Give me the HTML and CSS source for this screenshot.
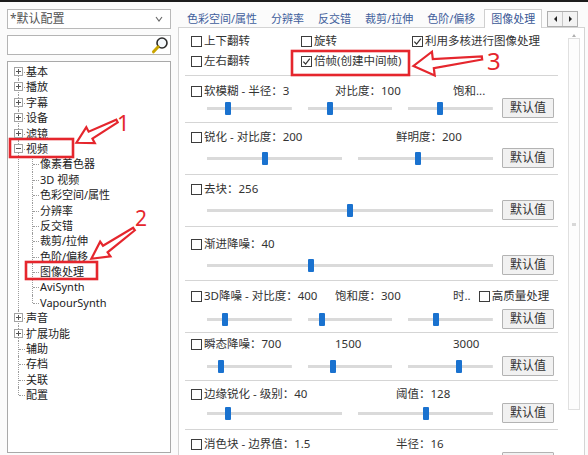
FILE: index.html
```html
<!DOCTYPE html>
<html lang="zh-CN">
<head>
<meta charset="utf-8">
<title>图像处理</title>
<link rel="stylesheet" href="styles.css">
</head>
<body>
<div class="topbar"></div>
<div class="dialog">
  <aside class="side">
    <div class="combo"><span>*默认配置</span>
      <svg class="chev" width="8" height="6" viewBox="0 0 8 6"><polyline points="1,1 4,5 7,1" fill="none" stroke="#666" stroke-width="1.1"/></svg>
    </div>
    <div class="search">
      <svg width="18" height="18" viewBox="0 0 18 18"><circle cx="11" cy="7" r="5" fill="#f4f8fb" stroke="#2a2a2a" stroke-width="1.6"/><line x1="7.2" y1="10.8" x2="2.5" y2="15.8" stroke="#c9a400" stroke-width="3" stroke-linecap="round"/></svg>
    </div>
    <div class="treebox">
      <ul class="tree root">
        <li><span class="row"><span class="exp"></span>基本</span></li>
        <li><span class="row"><span class="exp"></span>播放</span></li>
        <li><span class="row"><span class="exp"></span>字幕</span></li>
        <li><span class="row"><span class="exp"></span>设备</span></li>
        <li><span class="row"><span class="exp"></span>滤镜</span></li>
        <li><span class="row"><span class="exp minus"></span>视频</span>
          <ul class="tree sub">
            <li><span class="row">像素着色器</span></li>
            <li><span class="row">3D 视频</span></li>
            <li><span class="row">色彩空间/属性</span></li>
            <li><span class="row">分辨率</span></li>
            <li><span class="row">反交错</span></li>
            <li><span class="row">裁剪/拉伸</span></li>
            <li><span class="row">色阶/偏移</span></li>
            <li><span class="row">图像处理</span></li>
            <li><span class="row">AviSynth</span></li>
            <li><span class="row">VapourSynth</span></li>
          </ul>
        </li>
        <li><span class="row"><span class="exp"></span>声音</span></li>
        <li><span class="row"><span class="exp"></span>扩展功能</span></li>
        <li><span class="row">辅助</span></li>
        <li><span class="row">存档</span></li>
        <li><span class="row">关联</span></li>
        <li><span class="row">配置</span></li>
      </ul>
    </div>
  </aside>

  <main class="main">
    <div class="tabs">
      <span class="tab">色彩空间/属性</span>
      <span class="tab">分辨率</span>
      <span class="tab">反交错</span>
      <span class="tab">裁剪/拉伸</span>
      <span class="tab">色阶/偏移</span>
      <span class="tab sel">图像处理</span>
      <span class="tabnav"><span class="nb"><i class="tl"></i></span><span class="nb"><i class="tr"></i></span></span>
    </div>
    <div class="panel">
      <div class="content">
        <div class="opts">
          <label class="chk"><span class="cb"></span>上下翻转</label>
          <label class="chk"><span class="cb"></span>旋转</label>
          <label class="chk"><span class="cb on"><svg width="9" height="9" viewBox="0 0 9 9"><polyline points="1.3,4.6 3.6,7 7.8,1.6" fill="none" stroke="#333" stroke-width="1.2"/></svg></span>利用多核进行图像处理</label>
          <label class="chk"><span class="cb"></span>左右翻转</label>
          <label class="chk"><span class="cb on"><svg width="9" height="9" viewBox="0 0 9 9"><polyline points="1.3,4.6 3.6,7 7.8,1.6" fill="none" stroke="#333" stroke-width="1.2"/></svg></span>倍帧(创建中间帧)</label>
        </div>

        <div class="sec s1">
          <div class="hdr"><label class="chk"><span class="cb"></span>软模糊 - 半径：3</label><span>对比度：100</span><span>饱和...</span></div>
          <div class="srow"><div class="sls"><div class="sl"><i class="th" style="--p:.23"></i></div><div class="sl"><i class="th" style="--p:.24"></i></div><div class="sl"><i class="th" style="--p:.37"></i></div></div><span class="btn">默认值</span></div>
        </div>

        <div class="sec">
          <div class="hdr two"><label class="chk"><span class="cb"></span>锐化 - 对比度：200</label><span>鲜明度：200</span></div>
          <div class="srow"><div class="sls"><div class="sl"><i class="th" style="--p:.43"></i></div><div class="sl"><i class="th" style="--p:.44"></i></div></div><span class="btn">默认值</span></div>
        </div>

        <div class="sec">
          <div class="hdr"><label class="chk"><span class="cb"></span>去块：256</label></div>
          <div class="srow"><div class="sls"><div class="sl"><i class="th" style="--p:.50"></i></div></div><span class="btn">默认值</span></div>
        </div>

        <div class="sec s4">
          <div class="hdr"><label class="chk"><span class="cb"></span>渐进降噪：40</label></div>
          <div class="srow"><div class="sls"><div class="sl"><i class="th" style="--p:.36"></i></div></div><span class="btn">默认值</span></div>
        </div>

        <div class="sec s5">
          <div class="hdr"><label class="chk"><span class="cb"></span>3D降噪 - 对比度：400</label><span>饱和度：300</span><span class="c3">时..<label class="chk"><span class="cb"></span>高质量处理</label></span></div>
          <div class="srow"><div class="sls"><div class="sl"><i class="th" style="--p:.19"></i></div><div class="sl"><i class="th" style="--p:.15"></i></div><div class="sl"><i class="th" style="--p:.31"></i></div></div><span class="btn">默认值</span></div>
        </div>

        <div class="sec s6">
          <div class="hdr"><label class="chk"><span class="cb"></span>瞬态降噪：700</label><span>1500</span><span>3000</span></div>
          <div class="srow"><div class="sls"><div class="sl"><i class="th" style="--p:.14"></i></div><div class="sl"><i class="th" style="--p:.29"></i></div><div class="sl"><i class="th" style="--p:.60"></i></div></div><span class="btn">默认值</span></div>
        </div>

        <div class="sec s7">
          <div class="hdr two"><label class="chk"><span class="cb"></span>边缘锐化 - 级别：40</label><span>阈值：128</span></div>
          <div class="srow"><div class="sls"><div class="sl"><i class="th" style="--p:.14"></i></div><div class="sl"><i class="th" style="--p:.50"></i></div></div><span class="btn">默认值</span></div>
        </div>

        <div class="sec s8">
          <div class="hdr two"><label class="chk"><span class="cb"></span>消色块 - 边界值：1.5</label><span>半径：16</span></div>
          <div class="srow"><div class="sls"><div class="sl"><i class="th" style="--p:.30"></i></div><div class="sl"><i class="th" style="--p:.20"></i></div></div><span class="btn">默认值</span></div>
        </div>
      </div>
      <div class="vscroll">
        <span class="up"></span>
        <span class="thumb"><i></i></span>
        <span class="down"></span>
      </div>
    </div>
  </main>
</div>

<svg class="annot" width="588" height="455" viewBox="0 0 588 455">
  <g fill="none" stroke="#e5262d" stroke-width="2.6">
    <rect x="10" y="139" width="63" height="18"/>
    <rect x="26" y="262" width="71" height="17"/>
    <rect x="292" y="51" width="117" height="24"/>
  </g>
  <g fill="#fff" stroke="#e5262d" stroke-width="2.2" stroke-linejoin="miter">
    <polygon transform="translate(117,121) rotate(151.8)" points="0,-1.5 30,-4 30,-9 46,0 30,9 30,4 0,1.5"/>
    <polygon transform="translate(134,229) rotate(145.1)" points="0,-1.5 35,-4 35,-9 52,0 35,9 35,4 0,1.5"/>
    <polygon transform="translate(482,58) rotate(173.4)" points="0,-1.5 49,-4.5 49,-12 69,0 49,12 49,4.5 0,1.5"/>
  </g>
  <g fill="#e5262d" font-family="Noto Sans, sans-serif">
    <text x="117" y="131" font-size="22">1</text>
    <text x="135" y="226" font-size="21">2</text>
    <text x="487" y="70" font-size="24">3</text>
  </g>
</svg>
</body>
</html>
```

FILE: styles.css
```css
html, body {
  margin: 0;
  padding: 0;
}

body {
  width: 588px;
  height: 455px;
  overflow: hidden;
  position: relative;
  background: #fbfbfb;
  font-family: "Noto Sans", "Noto Sans CJK SC", sans-serif;
  color: #222;
}

.topbar {
  height: 2px;
  background: #1c1c1c;
}

.dialog {
  display: flex;
  height: 453px;
}

/* ---------- left side ---------- */
.side {
  width: 164px;
  margin-left: 7px;
  padding-top: 7px;
  display: flex;
  flex-direction: column;
  flex: none;
}

.combo {
  height: 20px;
  box-sizing: border-box;
  border: 1px solid #b9b9b9;
  background: #fff;
  display: flex;
  align-items: center;
  justify-content: space-between;
  padding: 0 7px 0 2px;
  font-size: 12px;
  line-height: 18px;
  color: #555;
}

.search {
  margin-top: 6px;
  height: 20px;
  box-sizing: border-box;
  border: 1px solid #b4b4b4;
  background: #fff;
  display: flex;
  justify-content: flex-end;
  align-items: center;
  padding-right: 1px;
}

.treebox {
  margin-top: 6px;
  height: 392px;
  box-sizing: border-box;
  border: 1px solid #a9a9a9;
  background: #fff;
  padding-top: 2px;
}

.tree {
  list-style: none;
  margin: 0;
  padding: 0;
  font-size: 11px;
  color: #222;
}

.root {
  margin-left: 10px;
}

.sub {
  margin-left: 6px;
}

.tree li {
  position: relative;
  padding-left: 8px;
}

.tree li::before {
  content: "";
  position: absolute;
  left: 0;
  top: 0;
  bottom: 0;
  border-left: 1px dotted #9c9c9c;
}

.tree li:last-child::before {
  bottom: auto;
  height: 8px;
}

.root > li:first-child::before {
  top: 8px;
}

.row {
  display: block;
  position: relative;
  height: 15.4px;
  line-height: 15.4px;
  white-space: nowrap;
}

.row::before {
  content: "";
  position: absolute;
  left: -7px;
  top: 8px;
  width: 6px;
  border-top: 1px dotted #9c9c9c;
}

.exp {
  position: absolute;
  left: -12px;
  top: 3px;
  width: 9px;
  height: 9px;
  box-sizing: border-box;
  border: 1px solid #a3a3a3;
  z-index: 1;
  background:
    linear-gradient(#555, #555) center / 5px 1px no-repeat,
    linear-gradient(#555, #555) center / 1px 5px no-repeat,
    #fff;
}

.exp.minus {
  background:
    linear-gradient(#555, #555) center / 5px 1px no-repeat,
    #fff;
}

/* ---------- main ---------- */
.main {
  margin-left: 7px;
  width: 407px;
  padding-top: 7px;
  display: flex;
  flex-direction: column;
  flex: none;
}

.tabs {
  display: flex;
  align-items: flex-end;
  height: 19px;
  padding-left: 2px;
  font-size: 11px;
  color: #3f5e9c;
  position: relative;
  z-index: 1;
}

.tab {
  padding: 0 7px;
  line-height: 17px;
  white-space: nowrap;
}

.tab.sel {
  border: 1px solid #cfcfcf;
  border-bottom: none;
  background: #fff;
  line-height: 18px;
  padding: 0 6px;
  margin-left: 2px;
  margin-bottom: -1px;
  color: #3a5896;
}

.tabnav {
  margin-left: 5px;
  align-self: center;
  display: flex;
  border: 1px solid #adadad;
  background: #f3f3f3;
  height: 16px;
  box-sizing: border-box;
  margin-top: 2px;
}

.nb {
  width: 14px;
  display: flex;
  align-items: center;
  justify-content: center;
}

.nb + .nb {
  border-left: 1px solid #c8c8c8;
}

.tl {
  width: 0;
  height: 0;
  border-top: 3px solid transparent;
  border-bottom: 3px solid transparent;
  border-right: 3px solid #222;
}

.tr {
  width: 0;
  height: 0;
  border-top: 3px solid transparent;
  border-bottom: 3px solid transparent;
  border-left: 3px solid #222;
}

.panel {
  flex: 1;
  display: flex;
  border: 1px solid #d4d4d4;
  border-bottom: none;
  background: #fff;
}

.content {
  width: 388px;
  padding-left: 6px;
  box-sizing: border-box;
  flex: none;
}

.opts {
  width: 373px;
  box-sizing: border-box;
  display: grid;
  grid-template-columns: 110px 111px auto;
  row-gap: 6px;
  padding: 6px 0 7px 6px;
  border-bottom: 1px solid #d5d5d5;
  font-size: 11.5px;
  color: #333;
}

.chk {
  display: flex;
  align-items: center;
  gap: 2px;
  height: 14px;
  line-height: 14px;
  white-space: nowrap;
}

.cb {
  width: 11px;
  height: 11px;
  box-sizing: border-box;
  border: 1px solid #3c3c3c;
  background: #fff;
  flex: none;
  display: flex;
  align-items: center;
  justify-content: center;
}

.sec {
  width: 373px;
  box-sizing: border-box;
  border-bottom: 1px solid #d5d5d5;
  padding: 7px 0 6px;
  font-size: 11.5px;
  color: #333;
}

.hdr {
  display: grid;
  grid-template-columns: 144px 118px auto;
  padding-left: 6px;
  height: 14px;
  line-height: 14px;
  white-space: nowrap;
}

.hdr.two {
  grid-template-columns: 205px auto;
}

.c3 {
  display: flex;
  gap: 8px;
}

.srow {
  display: flex;
  align-items: center;
  height: 20px;
  margin-top: 4px;
  padding: 0 4px 0 22px;
  gap: 9px;
}

.sls {
  flex: 1;
  display: flex;
  gap: 16px;
}

.sl {
  flex: 1;
  position: relative;
  height: 13px;
  background: linear-gradient(#dadada, #dadada) center / 100% 3px no-repeat;
}

.th {
  position: absolute;
  top: 0;
  left: calc((100% - 6px) * var(--p));
  width: 6px;
  height: 13px;
  background: #1a72cf;
  border-radius: 1px;
}

.btn {
  width: 52px;
  height: 20px;
  box-sizing: border-box;
  border: 1px solid #b3b3b3;
  background: #f1f1f1;
  font-size: 12px;
  line-height: 18px;
  text-align: center;
  color: #333;
  border-radius: 1px;
  flex: none;
}

/* section spacing variants */
.s1 { padding: 8px 0 4px; }
.s1 .srow { margin-top: 0; }
.s4 { padding: 10px 0 5px; }
.s5 { padding: 8px 0 3px; }
.s5 .srow { margin-top: 6px; }
.s6 { padding: 4px 0 4px; }
.s6 .srow { margin-top: 5px; }
.s7 { padding: 6px 0 6px; }
.s7 .srow { margin-top: 2px; }
.s8 .srow { margin-top: 1px; }

/* scrollbar */
.vscroll {
  width: 12px;
  margin-left: 1px;
  display: flex;
  flex-direction: column;
  align-items: center;
}

.up {
  margin-top: 3px;
  height: 6px;
  flex: none;
  width: 0;
  border-left: 2.5px solid transparent;
  border-right: 2.5px solid transparent;
  border-bottom: 3px solid #b0b0b0;
  box-sizing: border-box;
}

.thumb {
  margin-top: 1px;
  width: 12px;
  height: 372px;
  box-sizing: border-box;
  border: 1px solid #e0e0e0;
  background: #fdfdfd;
  display: flex;
  align-items: center;
  justify-content: center;
}

.thumb i {
  width: 4px;
  height: 3px;
  background: #d8d8d8;
}

.down {
  margin-top: auto;
  margin-bottom: 4px;
  width: 0;
  height: 3px;
  border-left: 2.5px solid transparent;
  border-right: 2.5px solid transparent;
  border-top: 3px solid #b0b0b0;
}

/* annotation overlay */
.annot {
  position: absolute;
  left: 0;
  top: 0;
  pointer-events: none;
}
```
